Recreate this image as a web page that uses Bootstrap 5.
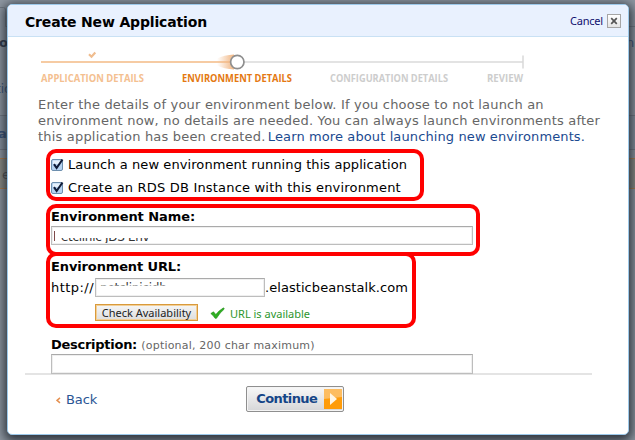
<!DOCTYPE html>
<html lang="en">
<head>
<meta charset="utf-8">
<meta name="viewport" content="width=device-width, initial-scale=1">
<title>Create New Application</title>
<link href="https://cdn.jsdelivr.net/npm/bootstrap@5.3.0/dist/css/bootstrap.min.css" rel="stylesheet">
<style>
body{width:635px;height:440px;overflow:hidden;background:#8f98a2;font:13px/16px "DejaVu Sans",Verdana,sans-serif;color:#000;position:relative}
.backdrop-page{position:absolute;inset:0;width:635px;height:440px}
.wizard{width:622px;height:431px;margin:4px 0 0 7px;background:#fff;border:1px solid #9dc9ea;border-radius:5px;box-shadow:0 3px 11px 3px rgba(28,34,42,.85);overflow:hidden}
.wizard-head{height:32px;background:#e9f1fe;border-bottom:1px solid #c9e1f4;padding:0 7px 0 17px}
.wizard-title{font:bold 14px/32px "DejaVu Sans",sans-serif;letter-spacing:-.16px;margin:2px 0 0}
.cancel{font:11px/16px "Noto Sans",sans-serif;letter-spacing:-.2px;color:#10106e}
.close-box{width:14px;height:14px;border:1px solid #a5a5a5;background:linear-gradient(#fff,#e4e4e4)}
.steps{height:60px;margin-left:17px}
.steps text{font:bold 11.3px "Open Sans","Noto Sans",sans-serif}
.intro{margin:0 0 4px 30px;color:#666;letter-spacing:.19px;white-space:nowrap}
.intro a{color:#1b4a90;letter-spacing:.11px;margin-left:-2px}
.frame{margin-left:38px;border:4px solid #f00;border-radius:10px;padding-left:1px}
.frame-opts{width:378px;height:52px;margin-bottom:3px}
.frame-name{width:434px;height:52px}
.frame-url{width:370px;height:76px;margin-top:-4px;padding-top:2px}
.opt{height:23px;line-height:23px}
.tick{width:13px;height:13px;margin-right:4px;overflow:visible}
.lbl{font-weight:bold;line-height:17px;height:17px}
.field{height:19px;border:1px solid #bdbdbd;border-top-color:#aaa;box-shadow:inset 0 0 0 1px #efefef;background:#fff;overflow:hidden}
.field-wide{width:422px}
.url-row{line-height:19px;height:19px;margin-top:3px}
.field-url{width:170px}
/* only a sliver of these two values stays visible */
.sliver{font-size:12px;line-height:16px;height:17px;color:#333;white-space:nowrap}
.sliver-low{margin-left:6px;margin-top:2px;letter-spacing:-.3px;clip-path:inset(9px 0 3px 0)}
.sliver-top{margin-left:4px;margin-top:1px;letter-spacing:-.2px;clip-path:inset(0 0 11.500px 0)}
.caret-bar{width:1px;height:10px;margin:4px 0 0 2px;background:#7d4a4a}
.check-btn{width:103px;height:17px;margin-left:44px;padding:0;border:1px solid #d99a3c;border-radius:0;box-shadow:inset 0 0 0 1px #f2cf96;background:linear-gradient(#f6f6f6,#dedede);font:11px/14px "Noto Sans",sans-serif;color:#222}
.avail{font:11px/16px "Noto Sans",sans-serif;color:#2c962c;margin-left:5px}
.desc{margin:8px 0 0 43px}
.hint{font-size:11px;letter-spacing:.2px;color:#666;font-weight:normal}
.rule{width:567px;height:2px;background:#e4e4e4;margin:-1px 0 0 17px}
.field-desc{height:20px;position:relative}
.foot{margin:11px 0 0 47px;height:26px}
.back{color:#2a5594;letter-spacing:-.1px;text-decoration:none;margin-top:2px}
.go{width:98px;height:26px;padding:0 1px 0 9px;border:1px solid #8f8f8f;border-radius:2px;background:linear-gradient(#f8f8f8,#d6d6d8);box-shadow:inset 0 0 0 1px #f4f4f4;font:bold 13px/22px "DejaVu Sans",sans-serif;letter-spacing:-.58px;color:#154587}
</style>
<script src="https://cdn.jsdelivr.net/npm/bootstrap@5.3.0/dist/js/bootstrap.bundle.min.js"></script>
</head>
<body>
<svg class="backdrop-page" viewBox="0 0 635 440" aria-hidden="true">
  <path d="M0 7.5H3.5Q5.500 7.500 5.500 10V26.500H7M628 26.500H635M0 115.500H635M0 149.500H635" fill="none" stroke="#747c86"/>
  <path d="M0 116H635V149H0z" fill="#87939f"/>
  <path d="M0 159H635V188H0z" fill="#8d8e86"/>
  <path d="M0 158.500H635M0 188.500H635" stroke="#b3824c"/>
  <g font-family="DejaVu Sans" font-size="13" fill="#30394a"><text x="-1" y="47" font-weight="bold">or</text><text x="-4" y="93" font-size="12" fill="#3a557c">tio</text><text x="-2" y="138" font-weight="bold" fill="#3a557c">a</text><text x="2" y="179" fill="#555">e</text><text x="626" y="47" fill="#3a557c">n</text></g>
</svg>
<main class="wizard position-relative">
  <header class="wizard-head d-flex justify-content-between align-items-center">
    <h1 class="wizard-title">Create New Application</h1>
    <div class="d-flex align-items-center gap-1"><a class="cancel text-decoration-none" href="#">Cancel</a>
      <svg class="close-box" viewBox="0 0 12 12"><path d="M3.200 3.200L8.800 8.800M8.800 3.200L3.200 8.800" stroke="#555" stroke-width="1.700"/></svg>
    </div>
  </header>
  <svg class="steps d-block" width="567" height="60" viewBox="25 37 567 60">
    <defs><linearGradient id="trail"><stop offset="0" stop-color="#f3b987" stop-opacity="0"/><stop offset="1" stop-color="#f0b480"/></linearGradient></defs>
    <path d="M41 62H230" stroke="#f6cba3" stroke-width="2"/>
    <path d="M244 62H523" stroke="#e3e3e3" stroke-width="2"/><path d="M523 55.500V68.500" stroke="#d8d8d8" stroke-width="1.500"/>
    <path d="M217 58.500Q224 55 234 54.500V69.500Q224 69 217 65.500z" fill="url(#trail)"/>
    <circle cx="237.300" cy="62" r="6.700" fill="#fff" stroke="#8e8e8e" stroke-width="1.700"/>
    <path d="M89 54.300L91.500 56.700L95.300 52.500" fill="none" stroke="#f0bd8f" stroke-width="2.200"/>
    <text x="41" y="81.500" textLength="103" lengthAdjust="spacingAndGlyphs" fill="#f4c090">APPLICATION DETAILS</text>
    <text x="182" y="81.500" textLength="110" lengthAdjust="spacingAndGlyphs" fill="#e47911">ENVIRONMENT DETAILS</text>
    <text x="330" y="81.500" textLength="118" lengthAdjust="spacingAndGlyphs" fill="#cdcdcd">CONFIGURATION DETAILS</text>
    <text x="487" y="81.500" textLength="36" lengthAdjust="spacingAndGlyphs" fill="#cdcdcd">REVIEW</text>
  </svg>
  <p class="intro">Enter the details of your environment below. If you choose to not launch an<br>environment now, no details are needed. You can always launch environments after<br>this application has been created. <a class="text-decoration-none" href="#">Learn more about launching new environments.</a></p>

  <section class="frame frame-opts">
    <div class="opt d-flex align-items-center"><svg class="tick" viewBox="0 0 13 13"><rect x=".5" y="1.500" width="11" height="11" rx="1.500" fill="#b5d3f1" stroke="#6d8fae"/><path d="M2 2.500H10V6H2z" fill="#e6f1fc"/><path d="M3 6.200L5.600 10L11.500 1.500" fill="none" stroke="#101c38" stroke-width="2.100"/></svg><span style="letter-spacing:.08px">Launch a new environment running this application</span></div>
    <div class="opt d-flex align-items-center"><svg class="tick" viewBox="0 0 13 13"><rect x=".5" y="1.500" width="11" height="11" rx="1.500" fill="#b5d3f1" stroke="#6d8fae"/><path d="M2 2.500H10V6H2z" fill="#e6f1fc"/><path d="M3 6.200L5.600 10L11.500 1.500" fill="none" stroke="#101c38" stroke-width="2.100"/></svg><span style="letter-spacing:.19px">Create an RDS DB Instance with this environment</span></div>
  </section>

  <section class="frame frame-name">
    <div class="lbl" style="letter-spacing:-.07px">Environment Name:</div>
    <div class="field field-wide d-flex" style="margin-top:1px"><i class="caret-bar"></i><div class="sliver sliver-low">etclinic JDS Env</div></div>
  </section>

  <section class="frame frame-url">
    <div class="lbl" style="letter-spacing:-.13px">Environment URL:</div>
    <div class="url-row d-flex"><span style="letter-spacing:.45px;width:44px">http://</span><div class="field field-url"><div class="sliver sliver-top">petclinicjdb</div></div><span style="letter-spacing:.06px">.elasticbeanstalk.com</span></div>
    <div class="d-flex align-items-start" style="margin-top:7px"><button class="btn check-btn" type="button">Check Availability</button>
      <svg width="15" height="12" viewBox="0 0 15 12" style="margin:3px 0 0 12px"><path d="M.8 6.500L3.500 4.800L5.800 7.500Q9 3.500 13.500 .8L14.300 2Q9.500 6 6.500 11.300H5Q3.500 8.500 .8 6.500z" fill="#2fae22" stroke="#238f1b" stroke-width=".6"/></svg>
      <span class="avail" style="margin-top:2px">URL is available</span></div>
  </section>

  <section class="desc">
    <div class="lbl" style="letter-spacing:-.27px">Description: <span class="hint">(optional, 200 char maximum)</span></div>
    <div class="field field-wide field-desc" style="margin-top:1px"></div>
  </section>
  <div class="rule"></div>
  <footer class="foot d-flex align-items-center">
    <a class="back d-flex align-items-center" href="#"><svg width="5" height="7" viewBox="0 0 5 7" style="margin:1px 5px 0 1px"><path d="M4 .8L1 3.300L4 5.800" fill="none" stroke="#e59050" stroke-width="1.500"/></svg>Back</a>
    <button class="btn go d-flex align-items-center justify-content-between" type="button" style="margin-left:149px"><span>Continue</span>
      <svg width="18" height="20" viewBox="0 0 18 20"><path d="M0 0H18V20H0z" fill="#ff9c0a"/><path d="M0 0H18V8L0 10z" fill="#fdbd61"/><path d="M6 4L13 10L6 16z" fill="#fff6e6"/></svg></button>
  </footer>
</main>
</body>
</html>
